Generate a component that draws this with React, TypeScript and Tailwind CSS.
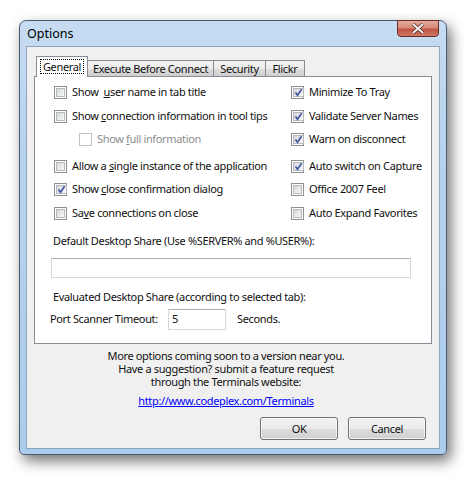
import React from 'react'

function CheckBox({ checked, disabled }: { checked?: boolean; disabled?: boolean }) {
    if (disabled) {
        return <span className="w-[13px] h-[13px] shrink-0 border border-[#c3c3c3] bg-white" />
    }
    return (
        <span className="w-[13px] h-[13px] shrink-0 border border-[#8e8f8f] bg-white p-[1px] flex">
            <span className="flex-1 border border-[#b6b9bd] bg-[linear-gradient(135deg,#d4d6d9_0%,#eceded_60%,#f7f7f7_100%)] flex items-center justify-center">
                {checked && (
                    <svg width="9" height="9" viewBox="0 0 9 9">
                        <path d="M1.5 4.5 L3.5 7.2 L7.6 1.2" fill="none" stroke="#4259a3" strokeWidth="1.7" />
                    </svg>
                )}
            </span>
        </span>
    )
}

function Option({ label, checked, disabled }: { label: React.ReactNode; checked?: boolean; disabled?: boolean }) {
    return (
        <div className="flex items-center h-[13px] gap-[5px]">
            <CheckBox checked={checked} disabled={disabled} />
            <span className={disabled ? 'text-[#8d8d8d] whitespace-pre' : 'whitespace-pre'}>{label}</span>
        </div>
    )
}

function Tab({ label, width }: { label: string; width: string }) {
    return (
        <div
            className={`${width} h-[16px] -ml-px border border-b-0 border-[#898c95] bg-[linear-gradient(#f2f2f2_0%,#ebebeb_50%,#dddddd_51%,#cfcfcf_100%)] flex items-center justify-center leading-[14px]`}
        >
            {label}
        </div>
    )
}

function Button({ label }: { label: string }) {
    return (
        <button className="w-[78px] h-[23px] rounded-[3px] border border-[#707070] bg-[linear-gradient(#f2f2f2_0%,#ebebeb_50%,#dddddd_51%,#cfcfcf_100%)] shadow-[inset_0_0_0_1px_rgba(255,255,255,0.7)] leading-none">
            {label}
        </button>
    )
}

export default function App() {
    return (
        <div className="w-[468px] h-[480px] bg-white pt-[20px] pl-[19px] font-['Segoe_UI','Noto_Sans',sans-serif] text-[11px] tracking-[-0.35px] text-[#111]">
            {/* Window */}
            <div className="w-[428px] h-[435px] rounded-t-[7px] rounded-b-[5px] border border-[#4a5a70] bg-[linear-gradient(180deg,#c6dcf2_0%,#b7d2ee_30%,#acccec_100%)] shadow-[4px_6px_14px_rgba(0,0,0,0.55)] flex flex-col">
                {/* Title bar */}
                <div className="h-[25px] flex justify-between shrink-0">
                    <span className="pl-[7px] pt-[4px] text-[12.5px] tracking-normal text-black">Options</span>
                    <div className="w-[42px] h-[17px] mr-[7px] -mt-px rounded-b-[4px] border border-[#6b2a22] bg-[linear-gradient(#e5ab9d_0%,#d78a79_45%,#c25442_55%,#d07a66_100%)] flex items-center justify-center">
                        <svg width="14" height="11" viewBox="0 0 14 11">
                            <path d="M2 1 L12 10 M12 1 L2 10" stroke="#5a2a24" strokeWidth="3.6" />
                            <path d="M2 1 L12 10 M12 1 L2 10" stroke="#f4f4f4" strokeWidth="2" />
                        </svg>
                    </div>
                </div>

                {/* Client area */}
                <div className="mx-[6px] h-[403px] border border-[#8fa5bd] bg-[#f0f0f0] pt-[9px] px-[7px] flex flex-col">
                    {/* Tab strip */}
                    <div className="h-[20px] flex items-end pl-[2px]">
                        <div className="relative z-10 w-[52px] h-[21px] -mb-px border border-b-0 border-[#898c95] bg-white flex items-start justify-center pt-[2px]">
                            <span className="border border-dotted border-black px-[2px] leading-[13px]">General</span>
                        </div>
                        <Tab label="Execute Before Connect" width="w-[127px]" />
                        <Tab label="Security" width="w-[53px]" />
                        <Tab label="Flickr" width="w-[40px]" />
                    </div>

                    {/* Tab panel */}
                    <div className="w-[398px] h-[268px] border border-[#898c95] bg-white flex flex-col pt-[9px]">
                        <div className="pl-[19px] flex flex-col">
                            <div className="grid grid-cols-[237px_1fr]">
                                <Option label={<>Show  <u>u</u>ser name in tab title</>} />
                                <Option label="Minimize To Tray" checked />
                            </div>
                            <div className="grid grid-cols-[237px_1fr] mt-[11px]">
                                <Option label={<>Show <u>c</u>onnection information in tool tips</>} />
                                <Option label="Validate Server Names" checked />
                            </div>
                            <div className="grid grid-cols-[237px_1fr] mt-[10px]">
                                <div className="pl-[25px]">
                                    <Option label={<>Show <u>f</u>ull information</>} disabled />
                                </div>
                                <Option label="Warn on disconnect" checked />
                            </div>
                            <div className="grid grid-cols-[237px_1fr] mt-[14px]">
                                <Option label={<>Allow a <u>s</u>ingle instance of the application</>} />
                                <Option label="Auto switch on Capture" checked />
                            </div>
                            <div className="grid grid-cols-[237px_1fr] mt-[10px]">
                                <Option label={<>Show <u>c</u>lose confirmation dialog</>} checked />
                                <Option label="Office 2007 Feel" />
                            </div>
                            <div className="grid grid-cols-[237px_1fr] mt-[11px]">
                                <Option label={<>Sa<u>v</u>e connections on close</>} />
                                <Option label="Auto Expand Favorites" />
                            </div>
                        </div>

                        <div className="pl-[18px] mt-[13px] leading-[15px]">
                            Default Desktop Share (Use %SERVER% and %USER%):
                        </div>
                        <div className="ml-[16px] mt-[10px] w-[360px] h-[20px] border border-[#d5d9de] border-t-[#abadb3] bg-white" />

                        <div className="pl-[18px] mt-[11px] leading-[15px]">
                            Evaluated Desktop Share (according to selected tab):
                        </div>
                        <div className="flex items-center mt-[5px] pl-[15px]">
                            <span className="w-[118px]">Port Scanner Timeout:</span>
                            <div className="w-[58px] h-[21px] border border-[#d5d9de] border-t-[#abadb3] bg-white flex items-center pl-[3px]">
                                5
                            </div>
                            <span className="ml-[11px]">Seconds.</span>
                        </div>
                    </div>

                    {/* Footer text */}
                    <div className="mt-[5px] pr-[14px] flex flex-col items-center leading-[13px]">
                        <div>More options coming soon to a version near you.</div>
                        <div>Have a suggestion? submit a feature request</div>
                        <div>through the Terminals website:</div>
                        <a href="#" className="mt-[6px] text-[#0000ff] underline">
                            http://www.codeplex.com/Terminals
                        </a>
                    </div>

                    {/* Buttons */}
                    <div className="mt-[10px] flex justify-end gap-[10px] pr-[6px]">
                        <Button label="OK" />
                        <Button label="Cancel" />
                    </div>
                </div>
            </div>
        </div>
    )
}
